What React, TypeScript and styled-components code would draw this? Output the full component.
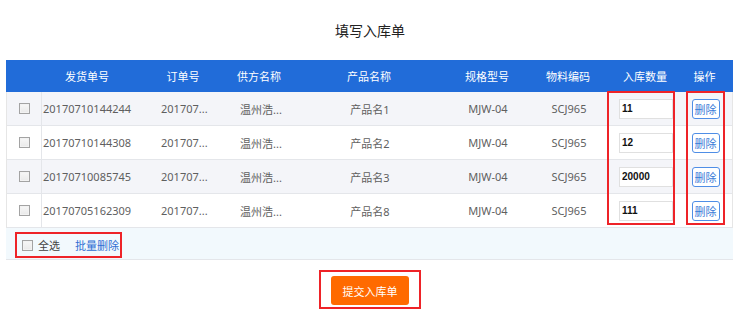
import React from "react";
import styled, { createGlobalStyle } from "styled-components";

const GlobalStyle = createGlobalStyle`
  html, body { margin: 0; padding: 0; background: #fff; }
  body { font-family: "Noto Sans", "Noto Sans CJK SC", sans-serif; }
`;

const COLS = "34px 94px 98px 54px 166px 70px 92px 62px 57px";

const Page = styled.div`
  width: 740px;
  display: flex;
  flex-direction: column;
  align-items: center;
`;

const Title = styled.h1`
  margin: 0;
  height: 60px;
  display: flex;
  align-items: center;
  justify-content: center;
  font-size: 14px;
  font-weight: normal;
  color: #222;
  font-family: "Noto Sans CJK SC", sans-serif;
`;

const Table = styled.div`
  width: 727px;
  margin-left: -1px;
  display: flex;
  flex-direction: column;
`;

const HeaderRow = styled.div`
  display: grid;
  grid-template-columns: ${COLS};
  height: 32px;
  background: #216cd9;
  align-items: center;
`;

const HeadCell = styled.div`
  color: #fff;
  font-size: 11px;
  text-align: center;
  font-family: "Noto Sans CJK SC", sans-serif;
`;

const Body = styled.div`
  position: relative;
  display: flex;
  flex-direction: column;
  border-left: 1px solid #e6e6e6;
  border-right: 1px solid #e6e6e6;
`;

const Row = styled.div<{ $alt: boolean }>`
  display: grid;
  grid-template-columns: ${COLS};
  height: 33px;
  border-bottom: 1px solid #e4e6ea;
  background: ${(p) => (p.$alt ? "#f4f5f9" : "#fff")};
  align-items: stretch;
`;

const Cell = styled.div<{ $align?: "left" | "center"; $pad?: number; $divider?: boolean }>`
  display: flex;
  align-items: center;
  justify-content: ${(p) => (p.$align === "left" ? "flex-start" : "center")};
  padding-left: ${(p) => p.$pad ?? 0}px;
  font-size: 11px;
  color: #5f5f5f;
  white-space: nowrap;
  overflow: hidden;
  border-left: ${(p) => (p.$divider ? "1px solid #e4e6ea" : "none")};
`;

const Check = styled.input.attrs({ type: "checkbox" })`
  appearance: none;
  -webkit-appearance: none;
  flex: none;
  width: 11px;
  height: 11px;
  margin: 0;
  border: 1px solid #a3a3a3;
  background: linear-gradient(#f7f7f7, #e9e9e9);
  box-shadow: inset 0 0 0 1px #f2f2f2;
  box-sizing: border-box;
`;

const QtyInput = styled.input`
  width: 54px;
  height: 20px;
  box-sizing: border-box;
  border: 1px solid #e0e0e0;
  padding: 0 0 0 2px;
  font-family: "Liberation Sans", sans-serif;
  font-weight: bold;
  font-size: 10px;
  color: #111;
  background: #fff;
  outline: none;
`;

const DelButton = styled.button`
  width: 28px;
  height: 20px;
  padding: 0;
  border: 1px solid #4f8ee6;
  border-radius: 3px;
  background: #fff;
  color: #3a7bd8;
  font-size: 11px;
  font-family: "Noto Sans CJK SC", sans-serif;
`;

const Mark = styled.div<{ $left: number; $width: number }>`
  position: absolute;
  top: -1px;
  height: 134px;
  left: ${(p) => p.$left}px;
  width: ${(p) => p.$width}px;
  border: 2px solid #ee2328;
  box-sizing: border-box;
  pointer-events: none;
`;

const Footer = styled.div`
  height: 32px;
  background: #f2f9fd;
  border-bottom: 1px solid #e4e6ea;
  display: flex;
  align-items: flex-start;
  padding: 4px 0 0 9px;
  box-sizing: border-box;
`;

const MarkedGroup = styled.div`
  display: flex;
  align-items: center;
  height: 26px;
  box-sizing: border-box;
  border: 2px solid #ee2328;
  padding: 0 1px 0 5px;
  font-size: 11px;
  white-space: nowrap;
  font-family: "Noto Sans CJK SC", sans-serif;
`;

const SelectAll = styled.span`
  color: #444;
  margin-left: 5px;
`;

const BatchLink = styled.a`
  color: #2f6fd3;
  margin-left: 15px;
  text-decoration: none;
`;

const SubmitFrame = styled.div`
  margin-top: 10px;
  border: 2px solid #ee2328;
  padding: 4px 10px 2px;
  display: flex;
`;

const SubmitButton = styled.button`
  width: 78px;
  height: 29px;
  border: none;
  border-radius: 3px;
  background: #ff6a00;
  color: #fff;
  font-size: 11px;
  font-family: "Noto Sans CJK SC", sans-serif;
  padding: 0;
`;

const rows = [
  { ship: "20170710144244", product: "产品名1", qty: "11" },
  { ship: "20170710144308", product: "产品名2", qty: "12" },
  { ship: "20170710085745", product: "产品名3", qty: "20000" },
  { ship: "20170705162309", product: "产品名8", qty: "111" },
];

const headers = ["", "发货单号", "订单号", "供方名称", "产品名称", "规格型号", "物料编码", "入库数量", "操作"];

export default function App() {
  return (
    <>
      <GlobalStyle />
      <Page>
        <Title>填写入库单</Title>
        <Table>
          <HeaderRow>
            {headers.map((h, i) => (
              <HeadCell key={i}>{h}</HeadCell>
            ))}
          </HeaderRow>
          <Body>
            {rows.map((r, i) => (
              <Row key={r.ship} $alt={i % 2 === 0}>
                <Cell>
                  <Check />
                </Cell>
                <Cell $align="left" $pad={1} $divider>
                  {r.ship}
                </Cell>
                <Cell $align="left" $pad={26}>
                  201707...
                </Cell>
                <Cell $align="left" $pad={7}>
                  温州浩...
                </Cell>
                <Cell>{r.product}</Cell>
                <Cell>MJW-04</Cell>
                <Cell>SCJ965</Cell>
                <Cell>
                  <QtyInput defaultValue={r.qty} />
                </Cell>
                <Cell>
                  <DelButton>删除</DelButton>
                </Cell>
              </Row>
            ))}
            <Mark $left={600} $width={68} />
            <Mark $left={679} $width={39} />
          </Body>
          <Footer>
            <MarkedGroup>
              <Check />
              <SelectAll>全选</SelectAll>
              <BatchLink>批量删除</BatchLink>
            </MarkedGroup>
          </Footer>
        </Table>
        <SubmitFrame>
          <SubmitButton>提交入库单</SubmitButton>
        </SubmitFrame>
      </Page>
    </>
  );
}
